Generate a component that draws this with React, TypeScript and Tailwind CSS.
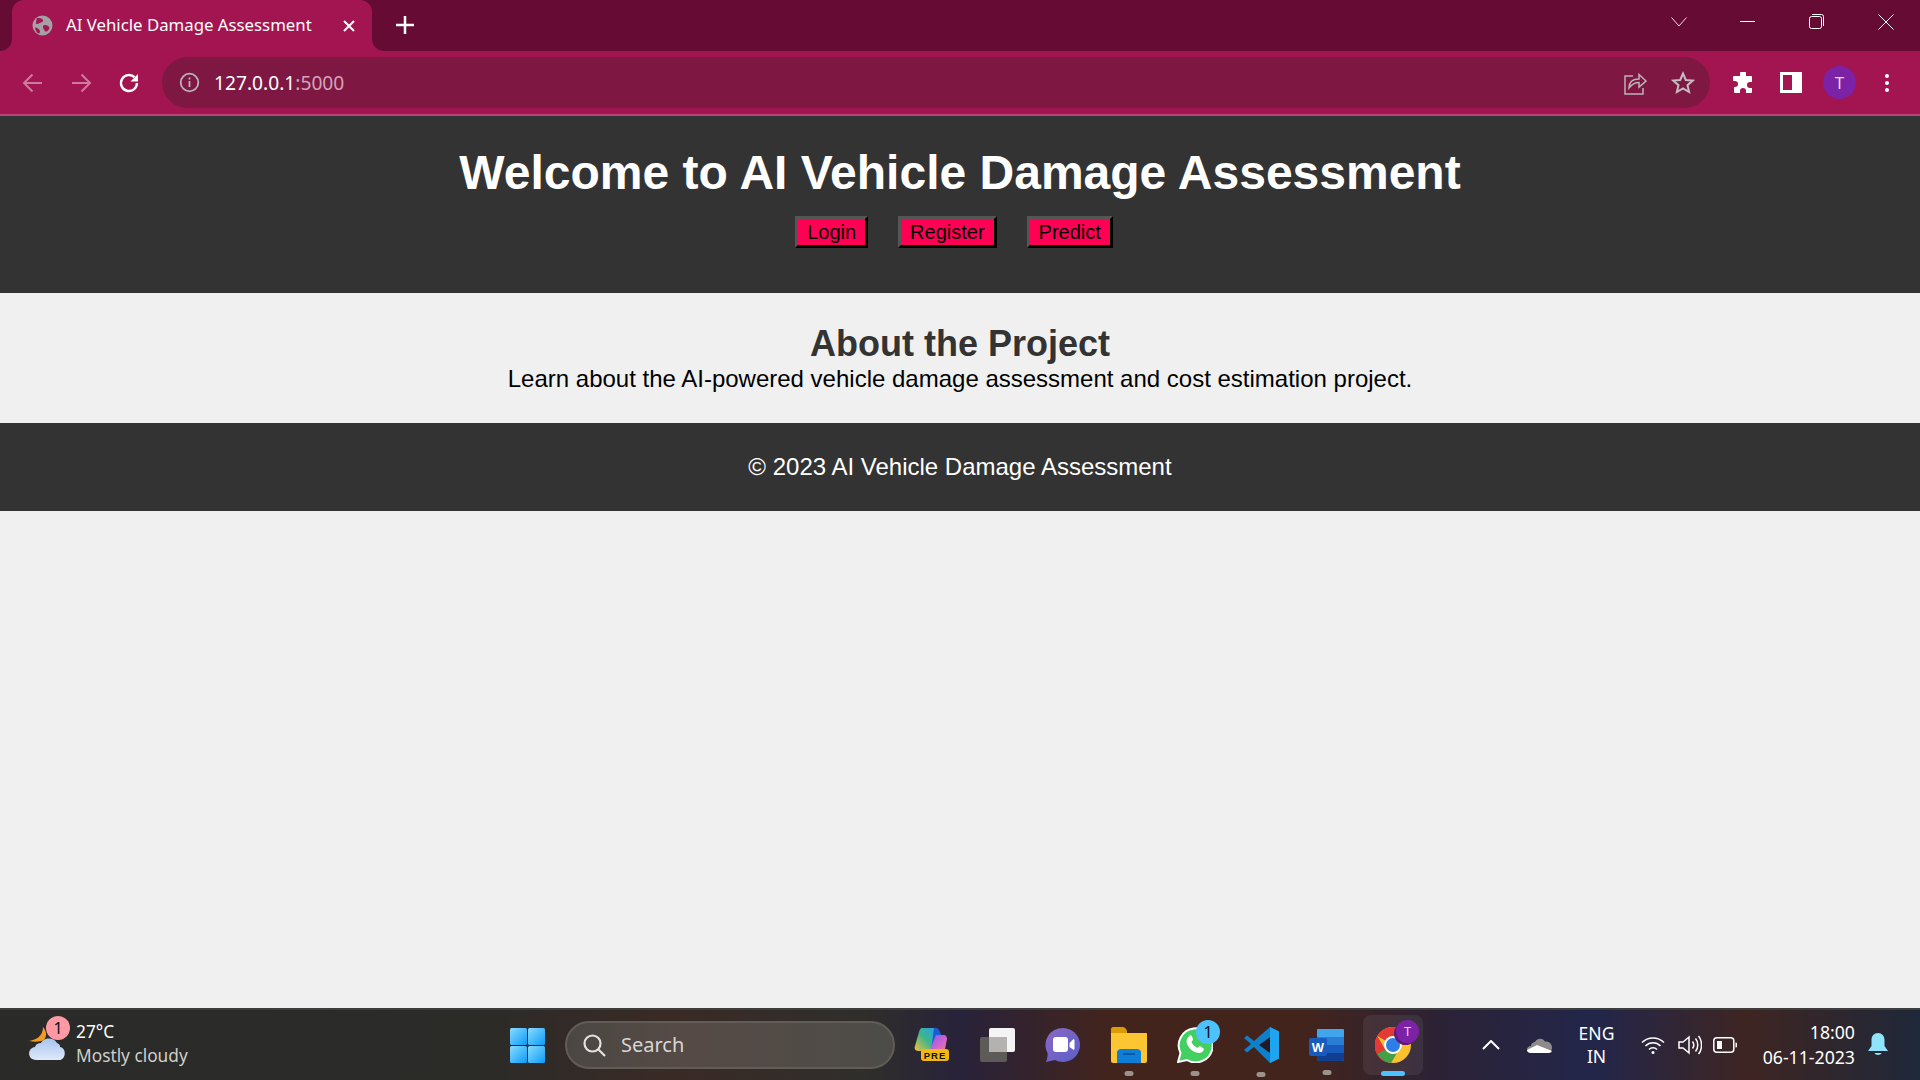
import React from "react";

const Back = ({ flip = false }: { flip?: boolean }) => (
  <svg width="24" height="24" viewBox="0 0 24 24" fill="none" stroke="#cf7a9d" strokeWidth="2" style={flip ? { transform: "scaleX(-1)" } : undefined}>
    <path d="M21 12H3.5M11.5 3.5 3 12l8.500 8.500" />
  </svg>
);

function TabStrip() {
  return (
    <div className="relative flex h-[51px] bg-[#660c34] text-white">
      <div className="relative ml-3 flex h-[51px] w-[360px] items-center rounded-t-xl bg-[#a31550] pl-5 pr-[17px]">
        <div className="absolute -left-3 bottom-0 h-3 w-3 bg-[#a31550]"><div className="h-3 w-3 rounded-br-xl bg-[#660c34]" /></div>
        <div className="absolute -right-3 bottom-0 h-3 w-3 bg-[#a31550]"><div className="h-3 w-3 rounded-bl-xl bg-[#660c34]" /></div>
        <svg width="21" height="21" viewBox="0 0 22 22" className="shrink-0">
          <circle cx="11" cy="11" r="10.500" fill="#a5a0a6" />
          <path d="M5 3.500c3-1 5 0 6.500 1.500 1 1.500-1 2.500-2.500 3S5.500 10 4 9zM12 11c2-1 4 0 5.500 1s.5 3-1 4.500-3 1-3.500-.5-2.500-3-1-5zM3 13c2 0 4 1 5 3s0 3-1 3.500C5 18.500 3.500 15.500 3 13z" fill="#a31550" />
        </svg>
        <span className="-mt-px ml-[13px] flex-1 font-['Noto_Sans'] text-[16.800px] whitespace-nowrap">AI Vehicle Damage Assessment</span>
        <svg width="12" height="12" viewBox="0 0 12 12" stroke="white" strokeWidth="2"><path d="M1 1l10 10M11 1 1 11" /></svg>
      </div>
      <svg width="18" height="18" viewBox="0 0 18 18" stroke="white" strokeWidth="2.500" className="ml-[24px] mt-4"><path d="M9 0v18M0 9h18" /></svg>
      <div className="ml-auto flex">
        <div className="flex w-[68px] justify-center pt-[17px]"><svg width="16" height="10" viewBox="0 0 16 10" fill="none" stroke="#f1dbe5" strokeWidth="1"><path d="M.500.500 8 9 15.500.500" /></svg></div>
        <div className="flex w-[69px] justify-center pt-[21px]"><div className="h-px w-[15px] bg-white" /></div>
        <div className="flex w-[69px] justify-center pt-[14px]"><svg width="15" height="15" viewBox="0 0 15 15" fill="none" stroke="white" strokeWidth="1"><rect x=".500" y="2.500" width="12" height="12" rx="2" /><path d="M3 .500h9.500a2 2 0 0 1 2 2V12" /></svg></div>
        <div className="flex w-[69px] justify-center pt-[14px]"><svg width="16" height="16" viewBox="0 0 16 16" stroke="white" strokeWidth="1"><path d="M.500.500l15 15M15.500.500l-15 15" /></svg></div>
      </div>
    </div>
  );
}

function Toolbar() {
  return (
    <div className="flex h-[65px] items-start border-b-2 border-[#bb4475] bg-[#a31550] pt-[6px] text-white">
      <div className="flex h-[51px] items-center pl-[21px]">
        <Back />
        <div className="ml-[24px]"><Back flip /></div>
        <svg width="24" height="24" viewBox="0 0 24 24" fill="none" className="ml-[24px]">
          <path d="M20 12a8 8 0 1 1-2.500-5.800" stroke="white" strokeWidth="2.400" />
          <path d="M21 3v7.500h-7.500z" fill="white" />
        </svg>
      </div>
      <div className="ml-[21px] flex h-[51px] w-[1548px] items-center rounded-full bg-[#7e1843] pl-[17px]">
        <svg width="21" height="21" viewBox="0 0 21 21" fill="none" stroke="#bdb2b8" strokeWidth="1.800">
          <circle cx="10.500" cy="10.500" r="8.800" />
          <path d="M10.500 9v6M10.500 5.500v2" />
        </svg>
        <span className="ml-[14px] font-['Noto_Sans'] text-[19.200px] leading-none">127.0.0.1<span className="text-[#d5a3b8]">:5000</span></span>
        <div className="ml-auto flex items-center">
          <svg width="24" height="24" viewBox="0 0 24 24" fill="none" stroke="#bdb2b8" strokeWidth="1.500">
            <path d="M10 5H2v18h18v-6" />
            <path d="M7 18c0-6 4-9 10-9V4.500l7 6.500-7 6v-4.500c-4 0-7 1.500-10 5.500z" transform="translate(-1 -1)" />
          </svg>
          <svg width="24" height="24" viewBox="0 0 24 24" fill="none" stroke="#c6bbc1" strokeWidth="2" className="ml-[24px] mr-[15px]">
            <path d="M12 2.500l2.800 6.500 7 .600-5.300 4.600 1.600 6.800-6.100-3.600-6.100 3.600 1.600-6.800L2.200 9.600l7-.600z" />
          </svg>
        </div>
      </div>
      <div className="flex h-[51px] flex-1 items-center pl-[22px]">
        <svg width="22" height="22" viewBox="0 0 22 22" fill="white"><path d="M8 1.500a3 3 0 0 1 6 0V4h5a1 1 0 0 1 1 1v5h-2a3 3 0 0 0 0 6h2v4a1 1 0 0 1-1 1h-5v-2a3 3 0 0 0-6 0v2H3a1 1 0 0 1-1-1v-5h1a3 3 0 0 0 0-6H1V5a1 1 0 0 1 1-1h6z" /></svg>
        <div className="ml-[26px] flex h-[21px] w-[22px] border-[3px] border-white"><div className="ml-auto h-full w-[7px] bg-white" /></div>
        <div className="ml-[21px] flex h-[33px] w-[33px] items-center justify-center rounded-full bg-[#7c22a6] font-['Noto_Sans'] text-[17px] text-[#e9d5f2]">T</div>
        <div className="ml-[29px] flex flex-col gap-[3px]">
          <div className="h-1 w-1 rounded-full bg-white" />
          <div className="h-1 w-1 rounded-full bg-white" />
          <div className="h-1 w-1 rounded-full bg-white" />
        </div>
      </div>
    </div>
  );
}

const navButton = "border-[3px] border-t-[#555555] border-l-[#555555] border-r-black border-b-black bg-[#ff0055] px-[9px] h-[32px] text-[20px] leading-[24px] text-black";

function Page() {
  return (
    <div className="flex flex-1 flex-col bg-[#f0f0f0] font-['Liberation_Sans',Arial,sans-serif]">
      <header className="flex h-[177px] flex-col items-center bg-[#333333] pt-[29px] text-white">
        <h1 className="text-[48px] font-bold leading-[55px]">Welcome to AI Vehicle Damage Assessment</h1>
        <nav className="mr-[12px] mt-[16px] flex gap-[30px]">
          <button className={navButton}>Login</button>
          <button className={navButton}>Register</button>
          <button className={navButton}>Predict</button>
        </nav>
      </header>
      <section className="flex h-[130px] flex-col items-center pt-[31px] text-center">
        <h2 className="text-[36px] font-bold leading-[40px] text-[#333333]">About the Project</h2>
        <p className="mt-px text-[24px] leading-[28px] text-black">Learn about the AI-powered vehicle damage assessment and cost estimation project.</p>
      </section>
      <footer className="flex h-[88px] items-center justify-center bg-[#333333] text-[24px] text-white">© 2023 AI Vehicle Damage Assessment</footer>
    </div>
  );
}

const Dot = ({ active = false }: { active?: boolean }) => (
  <div className={active ? "absolute bottom-[-13px] left-1/2 h-[5px] w-6 -translate-x-1/2 rounded-full bg-[#4cc2ff]" : "absolute bottom-[-13px] left-1/2 h-[5px] w-[9px] -translate-x-1/2 rounded-full bg-[#9c928c]"} />
);

function Icons() {
  return (
    <div className="flex items-center">
      {/* Copilot */}
      <div className="relative flex w-[65px] justify-center">
        <svg width="36" height="36" viewBox="0 0 36 36">
          <defs>
            <linearGradient id="cpa" x1="0" y1="1" x2="1" y2="0"><stop offset="0" stopColor="#f5c13c" /><stop offset=".5" stopColor="#3fb58c" /><stop offset="1" stopColor="#27a0ea" /></linearGradient>
            <linearGradient id="cpb" x1="0" y1="0" x2="1" y2="1"><stop offset="0" stopColor="#7e5ce8" /><stop offset=".6" stopColor="#d563cf" /><stop offset="1" stopColor="#f0866b" /></linearGradient>
          </defs>
          <path d="M8 1h12c3 0 3 3 2 5l-5 16c-1 2-2 2-4 2H4c-3 0-4-3-3-5L5 5c.6-2 1.500-4 3-4z" fill="url(#cpa)" />
          <path d="M20 1c3-1 5 1 6 4l3 8c-.500 6-6 10-12 11z" fill="#1c5bd8" />
          <path d="M22 8h8c2 0 3 2 3 4l-2 10c-1 2-3 3-6 3H15z" fill="url(#cpb)" />
          <rect x="7" y="22" width="28" height="12" rx="3" fill="#f2b90f" />
          <text x="21" y="32" textAnchor="middle" fontFamily="Liberation Sans" fontWeight="700" fontSize="9.500" letterSpacing="1" fill="#111">PRE</text>
        </svg>
      </div>
      {/* Task view */}
      <div className="flex w-[66px] justify-center">
        <svg width="36" height="36" viewBox="0 0 36 36">
          <rect x="1" y="10" width="27" height="25" rx="2" fill="#5d5a58" />
          <rect x="10" y="1" width="26" height="24" rx="2" fill="#f4f4f4" />
          <rect x="10" y="10" width="18" height="15" fill="#b4b2b1" />
        </svg>
      </div>
      {/* Meet */}
      <div className="flex w-[66px] justify-center">
        <svg width="36" height="36" viewBox="0 0 36 36">
          <defs><linearGradient id="mt" x1="0" y1="0" x2="1" y2="1"><stop offset="0" stopColor="#8b68c4" /><stop offset="1" stopColor="#5a5fc9" /></linearGradient></defs>
          <path d="M18 1a17 17 0 1 1-8 32L1 35c1-3 2-6 1.500-9A17 17 0 0 1 18 1z" fill="url(#mt)" />
          <rect x="8" y="10" width="15" height="15" rx="3" fill="white" />
          <path d="M24.500 16l3.500-3.500c.6-.500 1.500 0 1.500.8v8.500c0 .8-1 1.200-1.500.8L24.500 20z" fill="white" />
        </svg>
      </div>
      {/* Explorer */}
      <div className="relative flex w-[66px] justify-center">
        <svg width="36" height="36" viewBox="0 0 36 36">
          <path d="M0 2c0-1 1-2 2-2h10c1.500 0 2 1 3 2l1 2v4H0z" fill="#d99c05" />
          <path d="M0 6h35c.6 0 1 .4 1 1v27c0 1-1 2-2 2H2c-1 0-2-1-2-2z" fill="#fcc633" />
          <path d="M6 36V25c0-1.500 2-3 4-3h16c2 0 4 1.500 4 3v11z" fill="#0f7ed6" />
          <rect x="12" y="26" width="12" height="2" fill="#0a5aa8" />
        </svg>
        <Dot />
      </div>
      {/* WhatsApp */}
      <div className="relative flex w-[66px] justify-center">
        <svg width="36" height="36" viewBox="0 0 36 36">
          <path d="M1 35l2.500-9A17 17 0 1 1 10 33z" fill="#44cf62" stroke="white" strokeWidth="2" />
          <path d="M12 9c1-1 2.500-1 3 .5l1 2.500c.3 1-1 2-1.500 3 1 2.500 3 4.500 6 6 1-1 2-2 3-1.500l2.500 1.500c1 .6 1 1.800.200 3-1.500 2-4 2.500-7 1.500-5-2-8.500-5.500-9.500-10-.5-2.500.5-5 2.800-6.500z" fill="white" />
        </svg>
        <div className="absolute left-[34px] top-[-7px] flex h-6 w-6 items-center justify-center rounded-full bg-[#4cc2ff] font-['Noto_Sans'] text-[16px] text-[#111]">1</div>
        <Dot />
      </div>
      {/* VS Code */}
      <div className="relative flex w-[66px] justify-center">
        <svg width="36" height="38" viewBox="0 0 36 38">
          <path d="M27 1l9 4.500v27L27 37 11 21l-7 5.500L1 24l7-6-7-6 3-2.500L11 15z" fill="#0f7fc9" />
          <path d="M27 1l9 4.500v27L27 37V26l-11-7 11-8z" fill="#1fa5ef" />
          <path d="M27 11 16 19l11 8z" fill="#1f1a28" />
        </svg>
        <Dot />
      </div>
      {/* Word */}
      <div className="relative flex w-[66px] justify-center">
        <svg width="36" height="34" viewBox="0 0 36 34">
          <rect x="8" y="1" width="27" height="32" rx="2" fill="#2b7cd3" />
          <rect x="8" y="1" width="27" height="8" rx="1" fill="#41a5ee" />
          <rect x="8" y="17" width="27" height="8" fill="#185abd" />
          <path d="M8 25h27v6a2 2 0 0 1-2 2H10a2 2 0 0 1-2-2z" fill="#103f91" />
          <rect x="0" y="10" width="18" height="18" rx="2" fill="#185abd" />
          <text x="9" y="24" textAnchor="middle" fontFamily="Liberation Sans" fontWeight="700" fontSize="13" fill="white">W</text>
        </svg>
        <Dot />
      </div>
      {/* Chrome */}
      <div className="relative ml-[3px] flex h-[60px] w-[60px] items-center justify-center rounded-lg bg-[#ffffff12]">
        <svg width="36" height="36" viewBox="0 0 36 36">
          <circle cx="18" cy="18" r="18" fill="#fbc02d" />
          <path d="M18 0a18 18 0 0 1 15.600 9H18a9 9 0 0 0-7.800 4.500L2.400 9A18 18 0 0 1 18 0z" fill="#e53935" />
          <path d="M2.400 9l7.800 13.500A9 9 0 0 0 18 27l-7.800 8A18 18 0 0 1 2.400 9z" fill="#e53935" />
          <path d="M10.200 22.500A9 9 0 0 0 22 26l-6 10A18 18 0 0 1 2.400 27z" fill="#43a047" />
          <circle cx="18" cy="18" r="9" fill="white" />
          <circle cx="18" cy="18" r="7" fill="#2d7ee8" />
        </svg>
        <div className="absolute left-[33px] top-[5px] flex h-[23px] w-[23px] items-center justify-center rounded-full bg-[#7c22a6] font-['Noto_Sans'] text-[13px] text-[#e9d5f2] shadow-[-2px_2px_0_#5b1a7c]">T</div>
        <div className="absolute bottom-[-1px] left-1/2 h-[5px] w-6 -translate-x-1/2 rounded-full bg-[#4cc2ff]" />
      </div>
    </div>
  );
}

function Taskbar() {
  return (
    <div className="flex h-[72px] shrink-0 items-center border-t-2 border-[#3d3d3d] bg-[linear-gradient(90deg,#2a2a28_0%,#2b2b28_25%,#3a2a26_35%,#2f2e2b_45%,#28223a_50%,#43241c_58%,#42241c_68%,#2c2236_75%,#22264a_83%,#3e2522_91%,#1f2839_100%)] font-['Noto_Sans',sans-serif] text-white">
      <div className="relative ml-[29px] w-[47px] self-stretch">
        <svg width="36" height="36" viewBox="0 0 36 36" className="absolute left-0 top-[16px]">
          <defs><linearGradient id="cl" x1="0" y1="0" x2="0" y2="1"><stop offset="0" stopColor="#a9c4ee" /><stop offset="1" stopColor="#dfe9fa" /></linearGradient></defs>
          <path d="M14 1c4 5 4 9 1 13-4 2-10 2-15 1 6-1 14-4 14-14z" fill="#f29a1f" />
          <path d="M7 34c-9 0-9-12-1-13 1-3 3-4 6-4 2-5 12-7 16 0 3 1 3 3 3 4 7 1 6 13-1 13z" fill="url(#cl)" />
        </svg>
        <div className="absolute left-[17px] top-[6px] flex h-6 w-6 items-center justify-center rounded-full bg-[#ff99a4] text-[16px] text-[#111]">1</div>
      </div>
      <div className="-mt-[2px] flex w-[434px] flex-col text-[17.300px] leading-[24px]">
        <span>27°C</span>
        <span className="text-[#cfcfcc]">Mostly cloudy</span>
      </div>
      <svg width="35" height="35" viewBox="0 0 35 35">
        <defs><linearGradient id="wn" x1="0" y1="0" x2="1" y2="1"><stop offset="0" stopColor="#8adcff" /><stop offset="1" stopColor="#0a9bf7" /></linearGradient></defs>
        <rect x="0" y="0" width="17" height="17" rx="1.500" fill="url(#wn)" />
        <rect x="18" y="0" width="17" height="17" rx="1.500" fill="url(#wn)" />
        <rect x="0" y="18" width="17" height="17" rx="1.500" fill="url(#wn)" />
        <rect x="18" y="18" width="17" height="17" rx="1.500" fill="url(#wn)" />
      </svg>
      <div className="ml-[20px] flex h-[48px] w-[330px] items-center rounded-full border-2 border-[#625c57] bg-[linear-gradient(90deg,#4a4743,#564a45_35%,#4d4c48)] pl-[16px] text-[20px] text-[#d8d6d4]">
        <svg width="23" height="23" viewBox="0 0 23 23" fill="none" stroke="#e4e2e0" strokeWidth="2.200"><circle cx="9.500" cy="9.500" r="8" /><path d="M15.500 15.500 22 22" /></svg>
        <span className="ml-[15px]">Search</span>
      </div>
      <div className="ml-[4px]"><Icons /></div>
      <div className="ml-[54px] flex w-[27px] justify-center">
        <svg width="18" height="10" viewBox="0 0 18 10" fill="none" stroke="white" strokeWidth="2"><path d="M1 9l8-8 8 8" /></svg>
      </div>
      <div className="ml-[23px]">
        <svg width="25" height="16" viewBox="0 0 25 16">
          <path d="M4 9c0-3 3-4 4-4 1-3 7-5 10-.500 3-.500 7 1.500 7 6 0 3-2 5.500-5 5.500H4c-3 0-4-2-4-3.500S1.500 9 4 9z" fill="#8f8b8c" />
          <path d="M0 13l10-5 15 6c-1 2-3 2-5 2H4c-2 0-4-1-4-3z" fill="white" />
        </svg>
      </div>
      <div className="ml-[27px] flex w-[35px] flex-col items-center text-[17.500px] leading-[23px]">
        <span>ENG</span>
        <span>IN</span>
      </div>
      <div className="ml-[27px] flex items-center">
        <svg width="24" height="18" viewBox="0 0 24 18" fill="none" stroke="white" strokeWidth="1.500">
          <path d="M1 6.500a15.500 15.500 0 0 1 22 0M4.500 10a10.500 10.500 0 0 1 15 0M8 13.500a5.500 5.500 0 0 1 8 0" />
          <circle cx="12" cy="16.500" r="1.500" fill="white" stroke="none" />
        </svg>
        <svg width="24" height="20" viewBox="0 0 24 20" fill="none" stroke="white" strokeWidth="1.500" className="ml-[13px]">
          <path d="M1 7v6h4l6 5V2L5 7zM14.500 6.500c1.500 2 1.500 5 0 7M17.500 3.500c3 3.500 3 9.500 0 13M20.500 1c4 4.500 4 13.500 0 18" />
        </svg>
        <svg width="24" height="16" viewBox="0 0 24 16" fill="none" stroke="white" strokeWidth="1.500" className="ml-[11px]">
          <rect x=".800" y=".800" width="20" height="14.400" rx="3" />
          <rect x="4" y="4" width="5" height="8" fill="white" stroke="none" />
          <path d="M22.500 5.500c1 0 1.500.5 1.500 1.500v2c0 1-.5 1.500-1.500 1.500z" fill="white" stroke="none" />
        </svg>
      </div>
      <div className="-mt-px ml-auto flex flex-col items-end text-[17.700px] leading-[25px]">
        <span>18:00</span>
        <span>06-11-2023</span>
      </div>
      <svg width="20" height="24" viewBox="0 0 20 24" fill="#8fe3fb" className="ml-[13px] mr-[32px]">
        <path d="M10 0c4 0 6.500 3 6.500 7v6l3.500 5H0l3.500-5V7c0-4 2.500-7 6.500-7z" />
        <path d="M6.500 20h7c-.5 2.500-6.500 2.500-7 0z" />
      </svg>
    </div>
  );
}

export default function App() {
  return (
    <div className="flex h-[1080px] w-[1920px] flex-col overflow-hidden">
      <TabStrip />
      <Toolbar />
      <Page />
      <Taskbar />
    </div>
  );
}
